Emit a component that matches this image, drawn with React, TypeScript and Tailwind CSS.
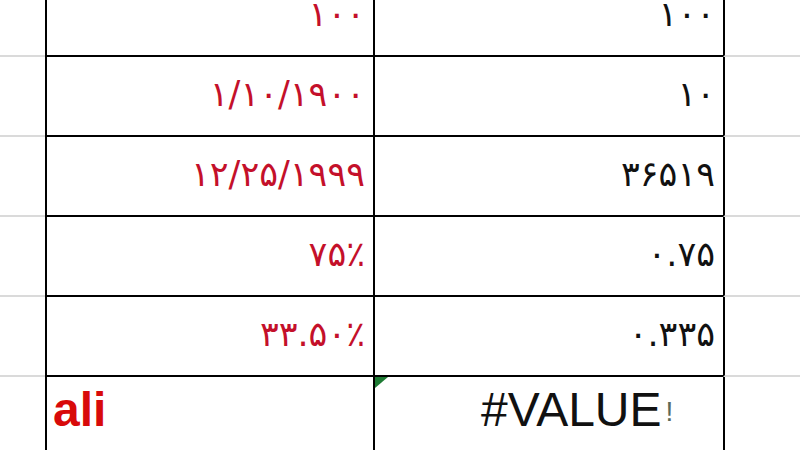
const rows = [
  { red: "۱۰۰", black: "۱۰۰" },
  { red: "۱/۱۰/۱۹۰۰", black: "۱۰" },
  { red: "۱۲/۲۵/۱۹۹۹", black: "۳۶۵۱۹" },
  { red: "۷۵٪", black: "۰.۷۵" },
  { red: "۳۳.۵۰٪", black: "۰.۳۳۵" },
];

const digitFont = "font-['DejaVu_Sans',sans-serif]";

export default function App() {
  return (
    <div className="w-[800px] h-[450px] overflow-hidden bg-white">
      <div className="-mt-[23px]">
        {rows.map((r, i) => (
          <div key={i} className="grid grid-cols-[45px_328px_350px_1fr] h-[80px]">
            <div className="border-b-2 border-[#dadada]" />
            <div className="border-l-2 border-b-2 border-black flex items-center justify-end pr-[8px] pb-[4px]">
              <span dir="ltr" className={`${digitFont} text-[35px] tracking-[1px] text-[#c4102a]`}>
                {r.red}
              </span>
            </div>
            <div className="border-l-2 border-b-2 border-black flex items-center justify-end pr-[8px] pb-[4px]">
              <span dir="ltr" className={`${digitFont} text-[35px] tracking-[1px] text-[#111]`}>
                {r.black}
              </span>
            </div>
            <div className="border-l-2 border-b-2 border-black border-b-[#dadada]" />
          </div>
        ))}
        <div className="grid grid-cols-[45px_328px_350px_1fr] h-[80px]">
          <div />
          <div className="border-l-2 border-black flex items-center pl-[6px] pb-[14px]">
            <span className="font-['Liberation_Sans',Arial,sans-serif] font-bold text-[48px] leading-none text-[#d80a0a]">
              ali
            </span>
          </div>
          <div className="relative border-l-2 border-black flex items-center pl-[106px] pb-[14px]">
            <svg className="absolute left-0 top-0" width="13" height="11" viewBox="0 0 13 11">
              <polygon points="0,0 13,0 0,11" fill="#1e7b34" />
            </svg>
            <span className="font-['Liberation_Sans',Arial,sans-serif] text-[48px] leading-none text-[#111]">
              #VALUE
            </span>
            <span className="font-['Liberation_Sans',Arial,sans-serif] text-[28px] leading-none text-[#5a6a5a] self-center mt-[4px] ml-[4px]">
              !
            </span>
          </div>
          <div className="border-l-2 border-black" />
        </div>
      </div>
    </div>
  );
}
